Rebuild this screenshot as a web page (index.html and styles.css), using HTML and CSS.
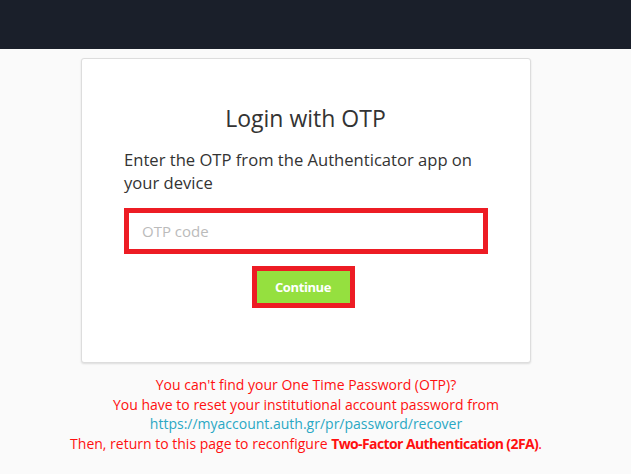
FILE: index.html
```html
<!DOCTYPE html>
<html lang="en">
<head>
<meta charset="utf-8">
<title>Login with OTP</title>
<link rel="stylesheet" href="styles.css">
</head>
<body>
<header class="topbar"></header>
<main class="column">
  <section class="card">
    <h1 class="title">Login with OTP</h1>
    <p class="lead">Enter the OTP from the Authenticator app on your device</p>
    <div class="field">
      <input class="otp" type="text" placeholder="OTP code">
    </div>
    <div class="actions">
      <button class="btn" type="button">Continue</button>
    </div>
  </section>
  <div class="help">
    <span class="line">You can't find your One Time Password (OTP)?</span>
    <span class="line">You have to reset your institutional account password from</span>
    <a class="line link" href="#">https://myaccount.auth.gr/pr/password/recover</a>
    <span class="line">Then, return to this page to reconfigure <b>Two-Factor Authentication (2FA)</b>.</span>
  </div>
</main>
</body>
</html>
```
FILE: styles.css
```css
* { box-sizing: border-box; }
html, body {
  margin: 0;
  padding: 0;
  background: #fafafa;
  font-family: "Open Sans", "DejaVu Sans", sans-serif;
  color: #333;
}
.topbar {
  height: 49px;
  background: #1a1f2a;
}
.column {
  width: 450px;
  margin: 9px 0 0 81px;
}
.card {
  background: #fff;
  border: 1px solid #ddd;
  border-radius: 3px;
  box-shadow: 0 1px 2px rgba(0,0,0,0.12);
  padding: 40px 43px 53px 42px;
  height: 305px;
}
.title {
  margin: 0;
  padding-top: 3px;
  text-align: center;
  font-weight: 400;
  font-size: 23px;
  line-height: 32px;
  color: #333;
}
.lead {
  margin: 14px 0 0 0;
  font-size: 16.6px;
  line-height: 23px;
  color: #333;
}
.field {
  margin-top: 14px;
}
.otp {
  display: block;
  width: 364px;
  height: 46px;
  border: 5px solid #ed1c24;
  padding: 0 13px;
  font-family: inherit;
  font-size: 15px;
  color: #333;
  background: #fff;
  outline: none;
}
.otp::placeholder { color: #bbb; }
.actions {
  display: flex;
  justify-content: center;
  margin-top: 12px;
  padding-right: 5px;
}
.btn {
  width: 103px;
  height: 42px;
  border: 5px solid #ed1c24;
  background: #95e03f;
  color: #fff;
  font-family: inherit;
  font-weight: 700;
  font-size: 13px;
  letter-spacing: -0.4px;
  padding: 0;
  cursor: pointer;
}
.help {
  margin: 12px -70px 0;
  display: flex;
  flex-direction: column;
  align-items: center;
  font-size: 14px;
  line-height: 19.7px;
  color: #ff1010;
}
.line { white-space: nowrap; }
.link {
  color: #2aa8c4;
  text-decoration: none;
}
.help b { font-weight: 700; letter-spacing: -0.6px; }
```
